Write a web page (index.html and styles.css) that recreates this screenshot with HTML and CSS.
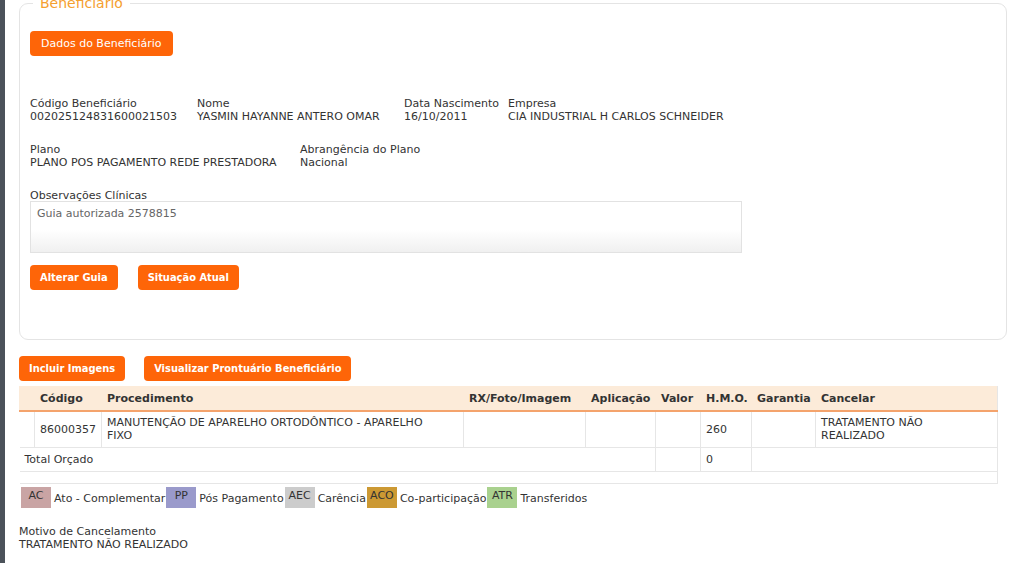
FILE: index.html
```html
<!DOCTYPE html>
<html lang="pt-BR">
<head>
    <meta charset="UTF-8">
    <meta name="viewport" content="width=device-width, initial-scale=1.0">
    <title>Guia - Beneficiário</title>
    <link rel="stylesheet" href="styles.css">
</head>
<body>
    <div class="page">
        <fieldset class="box">
            <legend>Beneficiário</legend>
            <button class="btn regular">Dados do Beneficiário</button>

            <div class="info-row first">
                <div class="field w1"><span class="lbl">Código Beneficiário</span><span>00202512483160002150​3</span></div>
                <div class="field w2"><span class="lbl">Nome</span><span>YASMIN HAYANNE ANTERO OMAR</span></div>
                <div class="field w3"><span class="lbl">Data Nascimento</span><span>16/10/2011</span></div>
                <div class="field"><span class="lbl">Empresa</span><span>CIA INDUSTRIAL H CARLOS SCHNEIDER</span></div>
            </div>

            <div class="info-row">
                <div class="field w4"><span class="lbl">Plano</span><span>PLANO POS PAGAMENTO REDE PRESTADORA</span></div>
                <div class="field"><span class="lbl">Abrangência do Plano</span><span>Nacional</span></div>
            </div>

            <div class="obs">
                <span class="lbl">Observações Clínicas</span>
                <div class="obs-text">Guia autorizada 2578815</div>
            </div>

            <div class="actions">
                <button class="btn">Alterar Guia</button>
                <button class="btn">Situação Atual</button>
            </div>
        </fieldset>

        <div class="actions outer">
            <button class="btn">Incluir Imagens</button>
            <button class="btn">Visualizar Prontuário Beneficiário</button>
        </div>

        <table class="grid">
            <thead>
                <tr>
                    <th class="c0"></th>
                    <th class="c1">Código</th>
                    <th class="c2">Procedimento</th>
                    <th class="c3">RX/Foto/Imagem</th>
                    <th class="c4">Aplicação</th>
                    <th class="c5">Valor</th>
                    <th class="c6">H.M.O.</th>
                    <th class="c7">Garantia</th>
                    <th>Cancelar</th>
                </tr>
            </thead>
            <tbody>
                <tr class="item">
                    <td></td>
                    <td>86000357</td>
                    <td class="wrap">MANUTENÇÃO DE APARELHO ORTODÔNTICO - APARELHO FIXO</td>
                    <td></td>
                    <td></td>
                    <td></td>
                    <td>260</td>
                    <td></td>
                    <td class="wrap-cancel">TRATAMENTO NÃO REALIZADO</td>
                </tr>
                <tr class="total">
                    <td colspan="5">Total Orçado</td>
                    <td></td>
                    <td>0</td>
                    <td colspan="2"></td>
                </tr>
                <tr class="spacer">
                    <td colspan="9"></td>
                </tr>
            </tbody>
        </table>

        <div class="legend-row">
            <span class="tag ac">AC</span><span class="tag-text">Ato - Complementar</span>
            <span class="tag pp">PP</span><span class="tag-text">Pós Pagamento</span>
            <span class="tag aec">AEC</span><span class="tag-text">Carência</span>
            <span class="tag aco">ACO</span><span class="tag-text">Co-participação</span>
            <span class="tag atr">ATR</span><span class="tag-text">Transferidos</span>
        </div>

        <div class="motivo">
            <span>Motivo de Cancelamento</span>
            <span>TRATAMENTO NÃO REALIZADO</span>
        </div>
    </div>
</body>
</html>
```

FILE: styles.css
```css
body {
    margin: 0;
    font-family: "DejaVu Sans", Verdana, sans-serif;
    font-size: 11px;
    color: #333;
    background: #fff;
    border-left: 5px solid #4b525a;
    min-height: 563px;
    box-sizing: border-box;
}
.page {
    padding: 0 9px 0 14px;
    margin-top: -5px;
}
.box {
    margin: 0;
    padding: 19px 10px 0 10px;
    width: 988px;
    height: 345px;
    box-sizing: border-box;
    border: 1px solid #e4e4e4;
    border-radius: 9px;
}
.box legend {
    margin-left: 3px;
    padding: 0 7px;
    color: #f5a030;
    font-size: 14px;
    line-height: 17px;
}
.btn {
    background: #fe6508;
    color: #fff;
    border: none;
    border-radius: 4px;
    height: 25px;
    padding: 0 10px;
    font-family: "DejaVu Sans Condensed", "DejaVu Sans", sans-serif;
    font-weight: bold;
    font-size: 11px;
    cursor: pointer;
}
.btn.regular {
    font-family: "DejaVu Sans", sans-serif;
    font-weight: normal;
    padding: 0 11px;
}
.info-row {
    display: flex;
    margin-top: 20px;
    line-height: 13px;
}
.info-row.first {
    margin-top: 41px;
}
.field {
    display: flex;
    flex-direction: column;
}
.w1 { width: 167px; }
.w2 { width: 207px; }
.w3 { width: 104px; }
.w4 { width: 270px; }
.obs {
    margin-top: 20px;
    line-height: 13px;
}
.obs-text {
    width: 712px;
    height: 52px;
    box-sizing: border-box;
    margin-top: -1px;
    padding: 5px 6px;
    border: 1px solid #e2e2e2;
    color: #666;
    background: linear-gradient(to bottom, #fff 0%, #fff 55%, #f0f0f0 100%);
}
.actions {
    display: flex;
    gap: 20px;
    margin-top: 12px;
}
.actions.outer {
    margin-top: 16px;
    gap: 19px;
}
.grid {
    margin-top: 5px;
    width: 979px;
    border-collapse: collapse;
    table-layout: fixed;
    border-right: 1px solid #e6e6e6;
}
.grid th, .grid td {
    box-sizing: border-box;
}
.grid th {
    background: #fcebd9;
    height: 25px;
    padding: 0 5px;
    text-align: left;
    font-weight: bold;
    font-size: 11px;
    white-space: nowrap;
    border-bottom: 2px solid #f4a36c;
    border-left: 1px solid #fcebd9;
}
.grid td {
    padding: 0 5px;
    border: 1px solid #e6e6e6;
    line-height: 13px;
    vertical-align: middle;
}
.grid td:first-child {
    border-left: none;
}
.grid td.wrap { padding-right: 12px; }
.grid td.wrap-cancel { padding-right: 20px; }
.c0 { width: 15px; }
.c1 { width: 67px; }
.c2 { width: 362px; }
.c3 { width: 122px; }
.c4 { width: 70px; }
.c5 { width: 45px; }
.c6 { width: 51px; }
.c7 { width: 64px; }
.item td { height: 36px; }
.total td { height: 24px; }
.spacer td { height: 12px; padding: 0; }
.legend-row {
    display: flex;
    align-items: stretch;
    margin-top: 3px;
    margin-left: 2px;
    height: 21px;
    line-height: 15px;
}
.tag {
    width: 30px;
    padding-top: 1px;
    text-align: center;
    color: #333;
}
.tag-text {
    padding: 4px 1px 0 3px;
}
.ac { background: #c9a4a4; }
.pp { background: #9a9acb; }
.aec { background: #cccccc; }
.aco { background: #cc9933; }
.atr { background: #a9d18e; }
.motivo {
    display: flex;
    flex-direction: column;
    margin-top: 17px;
    line-height: 13px;
}
```
